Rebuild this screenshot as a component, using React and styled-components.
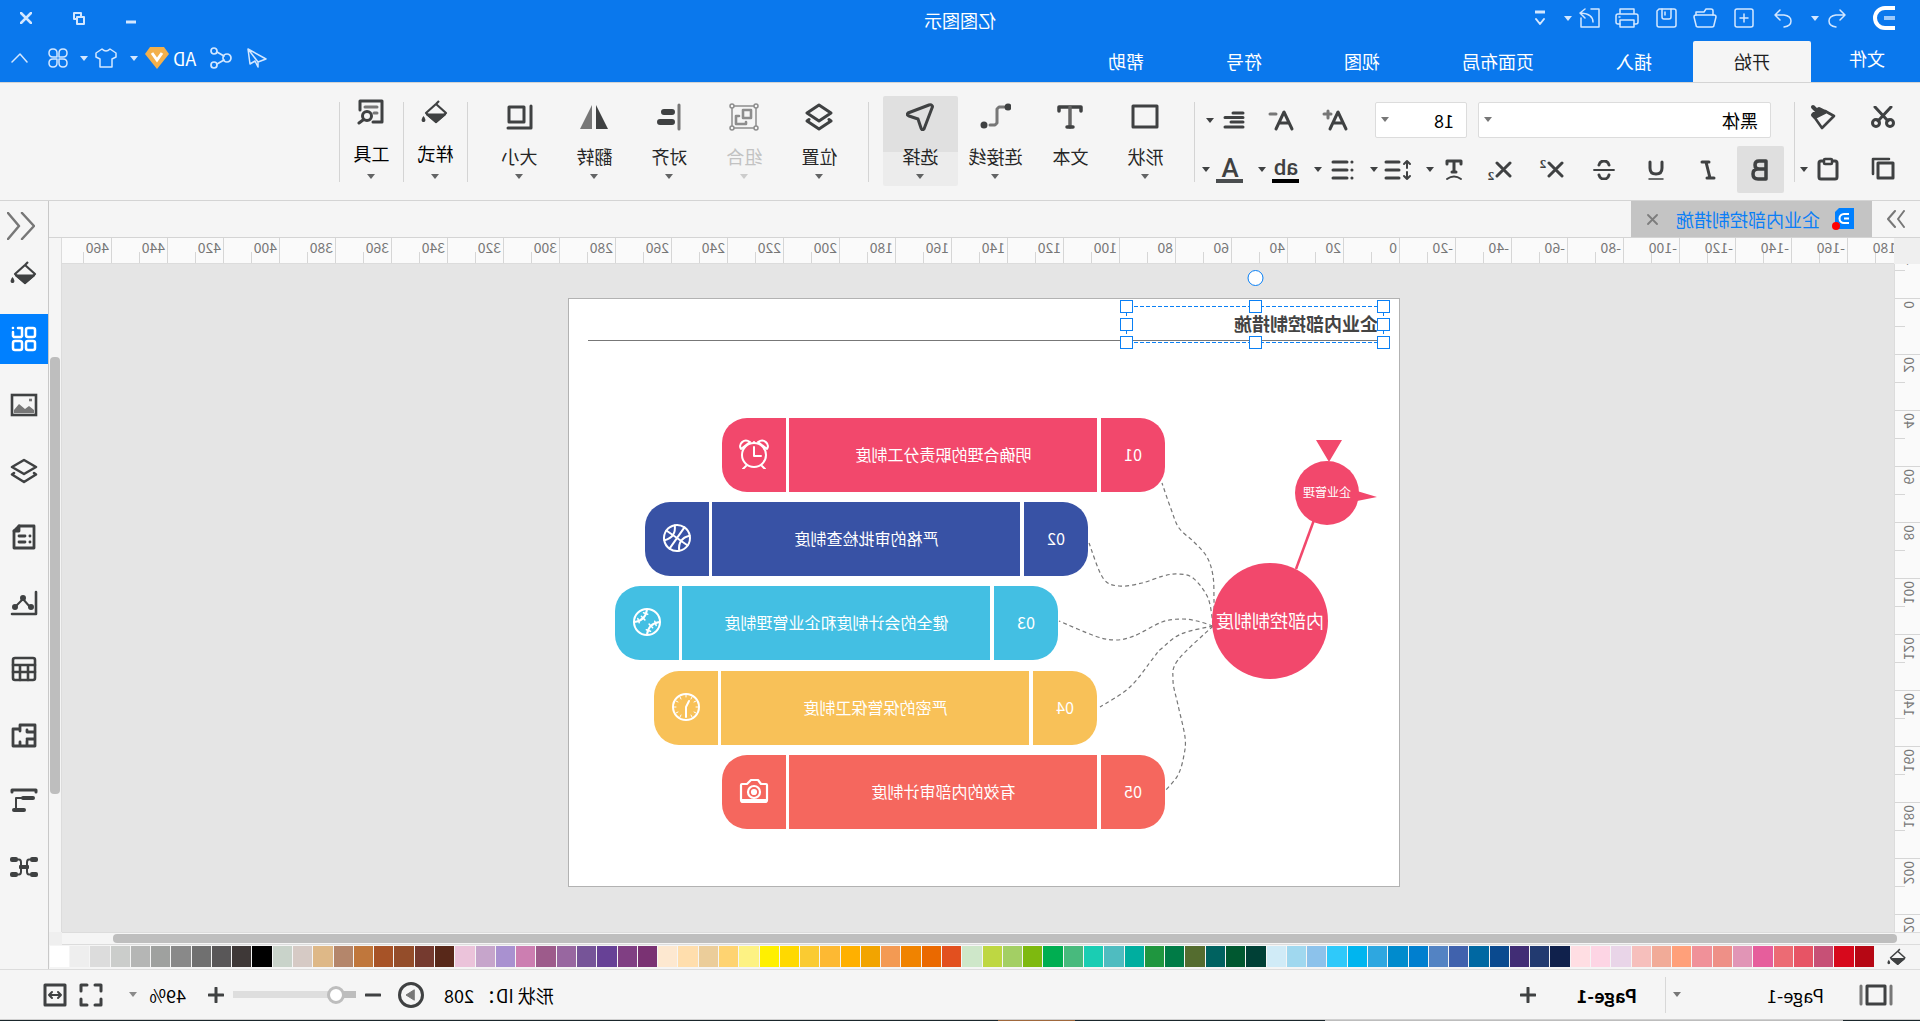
import React from "react";
import styled, { createGlobalStyle, css } from "styled-components";

const ink = "#3f4142";
const line = "#d4d4d4";
const panel = "#f5f5f5";
const blue = "#0a78ed";
const pink = "#f2486c";

const GlobalStyle = createGlobalStyle`
  *, *::before, *::after { box-sizing: border-box; }
  body { margin: 0; overflow: hidden; background: ${panel}; }
  body, button, select, input {
    font-family: "Noto Sans CJK SC", "Noto Sans", sans-serif;
    font-size: 18px;
    line-height: 24px;
    color: #1f1f1f;
  }
  button { border: 0; padding: 0; margin: 0; background: none; color: inherit; cursor: pointer; }
  svg { display: block; flex: none; }
`;

/* The whole window is presented as a mirror image. */
const Window = styled.div`
  display: flex;
  flex-direction: column;
  height: 100vh;
  background: ${panel};
  transform: scaleX(-1);
`;

/* ---------- shared pieces ---------- */

const Glyph = ({ w = 24, h = w, sw = 3, children, fill = "none" }) => (
  <svg
    width={w}
    height={h}
    viewBox={`0 0 ${w} ${h}`}
    fill={fill}
    stroke={fill === "none" ? "currentColor" : "none"}
    strokeWidth={sw}
    strokeLinecap="round"
    strokeLinejoin="round"
    aria-hidden="true"
  >
    {children}
  </svg>
);

const Caret = () => (
  <Glyph w={8} h={5} fill="currentColor">
    <path d="M0 0h8L4 5z" />
  </Glyph>
);

const IconButton = styled.button`
  display: flex;
  flex: none;
  align-items: center;
  justify-content: ${(p) => p.$justify || "center"};
  width: ${(p) => p.$w || 36}px;
  height: ${(p) => p.$h || 36}px;
  border-radius: 2px;
  background: ${(p) => (p.$active ? "#dfdfdf" : "transparent")};
`;

const Grow = styled.div`
  flex: 1;
`;

/* ---------- header ---------- */

const Header = styled.header`
  flex: none;
  background: ${blue};
  color: #d3e7ff;
`;

const TitleRow = styled.div`
  display: grid;
  grid-template-columns: 1fr auto 1fr;
  align-items: center;
  height: 41px;
`;

const QuickBar = styled.div`
  display: flex;
  align-items: center;
  height: 36px;
  align-self: start;
  padding-left: 24px;
`;

const Logo = styled.div`
  width: 41px;
  color: #fff;
`;

const AppTitle = styled.h1`
  margin: 0;
  padding-bottom: 2px;
  font-size: 18px;
  font-weight: 400;
  line-height: 24px;
  color: #fff;
`;

const WindowButtons = styled.div`
  display: flex;
  justify-content: flex-end;
  align-self: start;
  height: 34px;
`;

const TabRow = styled.div`
  display: flex;
  height: 41px;
`;

const FileTab = styled.button`
  width: 109px;
  height: 34px;
  padding-right: 3px;
  color: #fff;
`;

const RibbonTab = styled.button`
  height: 41px;
  padding: 0 41px 2px;
  border-radius: 2px 2px 0 0;
  color: ${(p) => (p.$active ? "#1f1f1f" : "#fff")};
  background: ${(p) => (p.$active ? panel : "transparent")};
`;

const HeaderTools = styled.div`
  display: flex;
  align-items: center;
  height: 34px;
  padding-right: 2px;
`;

const Account = styled.button`
  display: flex;
  align-items: center;
  gap: 4px;
  margin: 0 7px;
  color: #fff;
`;

/* ---------- ribbon ---------- */

const Ribbon = styled.div`
  display: flex;
  flex: none;
  align-items: flex-start;
  height: 119px;
  padding-top: 13px;
  border-top: 1px solid ${line};
  border-bottom: 1px solid ${line};
  color: ${ink};
`;

const Divider = styled.span`
  flex: none;
  width: 1px;
  height: 80px;
  margin-top: 6px;
  background: ${line};
`;

const ClipboardGroup = styled.div`
  display: flex;
  flex-direction: column;
  gap: 16px;
  width: 125px;
  padding: 3px 0 0 19px;
`;

const Row = styled.div`
  display: flex;
  align-items: center;
  gap: ${(p) => p.$gap || 0}px;
`;

const FontGroup = styled.div`
  width: 599px;
  padding-top: 6px;
`;

const FontRow = styled.div`
  display: flex;
  align-items: center;
  padding-left: 23px;
  margin-bottom: 8px;
`;

const StyleRow = styled.div`
  display: flex;
  align-items: center;
  padding-left: 10px;
`;

const FirstStyle = styled(IconButton)`
  margin-right: 3px;
`;

const SplitRow = styled.div`
  display: flex;
  gap: 8px;
`;

const Split = styled.button`
  display: flex;
  align-items: center;
  width: 48px;
  height: 36px;
`;

const SplitIcon = styled.span`
  display: flex;
  justify-content: center;
  width: 40px;
`;

const SizeButtons = styled.div`
  display: flex;
  align-items: center;
  margin-left: 13px;
`;

const Field = styled.label`
  position: relative;
  display: block;
  width: ${(p) => p.$w}px;
  margin-right: ${(p) => p.$mr || 0}px;
  color: #777;
  & > svg {
    position: absolute;
    right: 6px;
    top: 50%;
    margin-top: -3px;
    pointer-events: none;
  }
`;

const Select = styled.select`
  display: block;
  width: 100%;
  height: 36px;
  padding: 0 12px;
  appearance: none;
  border: 1px solid ${(p) => (p.$plain ? "transparent" : "#dcdcdc")};
  border-radius: 2px;
  background: ${(p) => (p.$plain ? "transparent" : "#fff")};
  color: #000;
`;

const BigGroup = styled.div`
  display: flex;
  padding: 0 14px 0 11px;
`;

const BigButton = styled.button`
  display: flex;
  flex-direction: column;
  align-items: center;
  width: ${(p) => (p.$raised ? 63 : 75)}px;
  height: 90px;
  padding-top: ${(p) => (p.$raised ? 2 : 7)}px;
  border-radius: 2px;
  color: ${(p) => (p.$off ? "#c2c2c2" : ink)};
  ${(p) =>
    p.$active &&
    css`
      background: linear-gradient(#e0e0e0 56px, #ececec 56px);
    `}
  & > span {
    margin: ${(p) => (p.$raised ? "15px 0 9px" : "13px 0 6px")};
    color: ${(p) => (p.$off ? "#c2c2c2" : p.$raised ? "#000" : "#262626")};
  }
  & > svg:last-child {
    opacity: 0.8;
  }
`;

/* ---------- workspace ---------- */

const Workspace = styled.div`
  display: flex;
  flex: 1;
  min-height: 0;
`;

const Main = styled.main`
  display: flex;
  flex: 1;
  flex-direction: column;
  min-width: 0;
`;

const DocTabs = styled.div`
  display: flex;
  flex: none;
  height: 37px;
  border-bottom: 1px solid ${line};
  color: #777;
`;

const DocTab = styled.div`
  display: flex;
  align-items: center;
  gap: 12px;
  padding: 0 16px 0 18px;
  background: #c4c4c4;
  color: #0a7ef7;
`;

const CloseTab = styled.button`
  margin-left: 6px;
  color: #7d7d7d;
`;

const Board = styled.div`
  display: grid;
  flex: 1;
  min-height: 0;
  grid-template: 26px minmax(0, 1fr) 13px / 26px minmax(0, 1fr) 13px;
`;

const Corner = styled.div`
  background: #efefef;
`;

const HRuler = styled.div`
  display: flex;
  overflow: hidden;
  background: #fafafa;
  border-bottom: 1px solid #dcdcdc;
`;

const HCell = styled.div`
  flex: none;
  width: 56px;
  padding-left: 2px;
  border-left: 1px solid #d6d6d6;
  background: linear-gradient(#d6d6d6, #d6d6d6) 27px 14px / 1px 12px no-repeat;
  font-size: 14px;
  line-height: 18px;
  color: #777;
  &:first-child { margin-left: -10px; }
`;

const VRuler = styled.div`
  overflow: hidden;
  background: #fafafa;
  border-right: 1px solid #dcdcdc;
`;

const VCell = styled.div`
  display: flex;
  height: 56px;
  padding-top: 2px;
  border-top: 1px solid #d6d6d6;
  background: linear-gradient(#d6d6d6, #d6d6d6) 15px 27px / 11px 1px no-repeat;
  font-size: 14px;
  line-height: 20px;
  color: #777;
  &:first-child { margin-top: -22px; }
  & > span {
    align-self: flex-start;
    writing-mode: vertical-rl;
    transform: rotate(180deg);
  }
`;

const Canvas = styled.div`
  display: flex;
  justify-content: center;
  align-items: flex-start;
  overflow: hidden;
  padding: 34px 12px 0 0;
  background: #e5e5e5;
`;

const VScroll = styled.div`
  grid-column: 3;
  grid-row: 1 / 3;
  padding: 119px 1px 138px 1px;
  border-left: 1px solid #dcdcdc;
`;

const HScroll = styled.div`
  grid-column: 1 / 3;
  padding: 1px 51px 1px 23px;
  border-top: 1px solid #dcdcdc;
  border-bottom: 1px solid #dcdcdc;
`;

const Thumb = styled.div`
  height: 100%;
  border-radius: 4px;
  background: #bebebe;
`;

const Palette = styled.div`
  display: flex;
  flex: none;
  height: 24px;
  padding: 1px 0 2px;
  color: ${ink};
`;

const Swatches = styled.div`
  display: flex;
  flex: 1;
  gap: 1px;
`;

const Swatch = styled.button`
  flex: 1;
  background: ${(p) => p.$color};
`;

const SidePanel = styled.aside`
  display: flex;
  flex: none;
  flex-direction: column;
  width: 49px;
  border-left: 1px solid #c8c8c8;
  color: ${ink};
`;

const CollapseButton = styled(IconButton)`
  width: 100%;
  height: 47px;
  padding: 2px 0 0 6px;
  color: #777;
`;

const SideButton = styled.button`
  display: flex;
  flex: none;
  align-items: center;
  justify-content: center;
  height: 50px;
  margin-bottom: 16px;
  background: ${(p) => (p.$active ? "#0080ff" : "transparent")};
  color: ${(p) => (p.$active ? "#fff" : ink)};
`;

/* ---------- drawing page ---------- */

const Page = styled.div`
  position: relative;
  flex: none;
  width: 832px;
  height: 589px;
  border: 1px solid #b2b2b2;
  background: #fff;
`;

const Layer = styled.svg`
  position: absolute;
  left: -1px;
  top: -1px;
  overflow: visible;
`;

const Placed = styled.div`
  position: absolute;
  left: ${(p) => p.$x}px;
  top: ${(p) => p.$y}px;
`;

const Heading = styled(Placed)`
  font-weight: 700;
  color: #444;
`;

const Circle = styled(Placed)`
  display: flex;
  align-items: center;
  justify-content: center;
  width: ${(p) => p.$d}px;
  height: ${(p) => p.$d}px;
  padding-bottom: 2px;
  border-radius: 50%;
  background: ${pink};
  color: #fff;
  font-size: ${(p) => p.$size}px;
  white-space: nowrap;
`;

const Bar = styled(Placed)`
  display: grid;
  grid-template-columns: 64px 308px 64px;
  justify-content: space-between;
  width: 443px;
  height: 74px;
  font-size: 16px;
  color: #fff;
`;

const Segment = styled.div`
  display: flex;
  align-items: center;
  justify-content: center;
  padding-bottom: 2px;
  background: ${(p) => p.$color};
  border-radius: ${(p) =>
    p.$end === "left" ? "25px 0 0 25px" : p.$end === "right" ? "0 25px 25px 0" : "0"};
`;

/* ---------- status bar ---------- */

const StatusBar = styled.footer`
  display: flex;
  flex: none;
  align-items: center;
  height: 51px;
  padding: 0 43px 0 27px;
  border-top: 1px solid #dcdcdc;
  border-bottom: 1px solid #d0d0d0;
  color: ${ink};
`;

const PagePicker = styled.div`
  padding-left: 22px;
`;

const StatusDivider = styled.span`
  width: 1px;
  height: 36px;
  background: #d8d8d8;
`;

const PageName = styled.button`
  margin: 0 31px 0 28px;
  font-weight: 700;
  color: #000;
`;

const StatusText = styled.span`
  margin-right: 12px;
  white-space: pre;
  color: #000;
`;

const ZoomButton = styled(IconButton)`
  width: 34px;
`;

const Range = styled.input`
  appearance: none;
  width: 123px;
  height: 18px;
  margin: 0;
  background: linear-gradient(90deg, #bdbdbd 20px, #dedede 20px) center / 100% 7px no-repeat;
  border-radius: 4px;
  &::-webkit-slider-thumb {
    appearance: none;
    width: 18px;
    height: 18px;
    border: 3px solid #bdbdbd;
    border-radius: 50%;
    background: #fff;
  }
`;

const ZoomValue = styled.button`
  display: flex;
  align-items: center;
  justify-content: space-between;
  width: 57px;
  margin: 0 26px 0 13px;
  color: #000;
  & > svg { color: #8a8a8a; }
`;

const FitButtons = styled.div`
  display: flex;
  gap: 12px;
`;

const DesktopEdge = styled.div`
  flex: none;
  height: 1px;
  background: linear-gradient(90deg, #1a262b 4%, #bdbdbd 4% 31%, #1a262b 31% 44%, #a0683c 44% 48%, #1a262b 48%);
`;

/* ---------- icons ---------- */

const Bucket = ({ w = 28, h = 24 }) => (
  <svg width={w} height={h} viewBox="0 0 28 24" fill="none" stroke="currentColor" strokeWidth="2.2" strokeLinejoin="round" aria-hidden="true">
    <path d="M13 4 3 13l10 9 10-9L13 4l-3-3" />
    <path d="M4 14.500h18L13 22z" fill="currentColor" />
    <path d="M25.500 16c-3 4-2 6 0 6s3-2 0-6z" fill="currentColor" stroke="none" />
  </svg>
);

const LayersIcon = () => (
  <Glyph w={28} h={28}>
    <path d="M14 2 26 10 14 18 2 10z" />
    <path d="M4 16.500 2 18l12 8 12-8-2-1.500" />
  </Glyph>
);

const DoubleChevron = ({ w = 18, h = 18, sw = 2, flip }) => (
  <Glyph w={w} h={h} sw={sw}>
    {flip ? (
      <path d={`M${w - 1} 1 ${w / 2 + 2} ${h / 2} ${w - 1} ${h - 1}M${w / 2 - 1} 1 1 ${h / 2} ${w / 2 - 1} ${h - 1}`} />
    ) : (
      <path d={`M1 1 ${w / 2 - 2} ${h / 2} 1 ${h - 1}M${w / 2 + 1} 1 ${w - 1} ${h / 2} ${w / 2 + 1} ${h - 1}`} />
    )}
  </Glyph>
);

const quickIcons = [
  ["新建", <Glyph w={20} h={20} sw={1.5}><rect x="1" y="1" width="18" height="18" rx="2" /><path d="M10 6v8M6 10h8" /></Glyph>],
  ["打开", <Glyph w={24} h={20} sw={1.5}><path d="M4 7V3q0-2 2-2h5l2 3h8v3" /><path d="M3 7h18q2 0 2 2l-2 8q0 2-2 2H5q-2 0-2-2L1 9q0-2 2-2z" /></Glyph>],
  ["保存", <Glyph w={21} h={20} sw={1.5}><path d="M3 1h15l2 2v14q0 2-2 2H3q-2 0-2-2V3q0-2 2-2z" /><path d="M6 1v8q0 2 2 2h5q2 0 2-2V1M12 4v3" /></Glyph>],
  ["打印", <Glyph w={24} h={20} sw={1.5}><path d="M5 6V1h14v5M5 16H3q-2 0-2-2V8q0-2 2-2h18q2 0 2 2v6q0 2-2 2h-2" /><path d="M5 12h14v7H5zM19 9h1" /></Glyph>],
];

const sideIcons = [
  ["填充", <Bucket />],
  ["符号库", <Glyph w={26} h={26} sw={2.500}><rect x="2" y="2" width="9" height="9" rx="2" /><path d="M24 2h.1M19 2h-4v8l1 1h7l1-1V6" /><rect x="2" y="15" width="9" height="9" rx="2" /><rect x="15" y="15" width="9" height="9" rx="2" /></Glyph>],
  ["图片", <svg width="28" height="24" viewBox="0 0 28 24" fill="none" stroke="currentColor" strokeWidth="2.600" aria-hidden="true"><rect x="2" y="2" width="24" height="20" /><path d="M4 20v-3l5-4 4 3 6-5 5 6v3z" fill="#777" stroke="none" /><path d="M6 7h3" stroke="#777" /></svg>],
  ["图层", <Glyph w={28} h={26} sw={2.600}><path d="M14 2 26 9 14 16 2 9z" /><path d="M4 15 2 16.500 14 24l12-7.500L24 15" /></Glyph>],
  ["注释", <Glyph w={24} h={26} sw={2.800}><path d="M2 2h15l5 5v17H2z" /><path d="M17 2v5h5" fill="currentColor" /><path d="M6 12h.1M11 12h6M6 18h.1M11 18h6" /></Glyph>],
  ["图表", <Glyph w={28} h={26} sw={2}><path d="M2 2v22h24" strokeWidth="2.600" /><path d="m8 17 7-8 8 8" /><g fill="currentColor"><circle cx="7" cy="17" r="2" /><circle cx="15" cy="8" r="2" /><circle cx="23" cy="17" r="2" /></g></Glyph>],
  ["表格", <Glyph w={26} h={26} sw={2.600}><rect x="2" y="2" width="22" height="22" rx="2" /><path d="M2 9h22M2 16h22M9 9v15M17 9v15" /></Glyph>],
  ["平面图", <Glyph w={26} h={25} sw={2.800}><path d="M2 2h15v4h7v17H2zM2 9h8V7M2 16h8M10 18v5M17 19v4M17 6v2" /></Glyph>],
  ["组织", <Glyph w={28} h={26} sw={3}><path d="M2 4V2h24v2" /><path d="M5 10h10M14 22h10" strokeWidth="4" /><path d="M15 10h7v11" strokeWidth="2" /></Glyph>],
  ["导图", <Glyph w={30} h={24} sw={2}><g fill="currentColor" stroke="none"><rect x="1" y="2" width="8" height="5" rx="2" /><rect x="21" y="2" width="8" height="5" rx="2" /><rect x="1" y="17" width="8" height="5" rx="2" /><rect x="21" y="17" width="8" height="5" rx="2" /><rect x="10" y="10" width="10" height="4" rx="1" /></g><path d="M9 4.500h1q2 0 2 3v9q0 3-2 3H9M21 4.500h-1q-2 0-2 3v9q0 3 2 3h1" /></Glyph>],
];

const bars = [
  { n: "01", x: 234, y: 120, color: pink, label: "明确合理的职责分工制度" },
  { n: "02", x: 311, y: 204, color: "#3852a5", label: "严格的审批检查制度" },
  { n: "03", x: 341, y: 288, color: "#43bfe3", label: "健全的会计制度和企业管理制度" },
  { n: "04", x: 302, y: 373, color: "#f8c158", label: "严密的保管保卫制度" },
  { n: "05", x: 234, y: 457, color: "#f5675e", label: "有效的内部审计制度" },
];

const barIcons = [
  <Glyph w={30} h={30} sw={2}><circle cx="15" cy="16" r="12" /><path d="M15 8v9H8M7 27l-3 3M23 27l3 3M2 10c-3-5 3-11 9-7zM28 10c3-5-3-11-9-7zM15 3v1" /></Glyph>,
  <Glyph w={30} h={30} sw={2}><g transform="rotate(-35 15 15)"><circle cx="15" cy="15" r="13" /><path d="M15 2v26M2 15h26M6 6q8 9 0 18M24 6q-8 9 0 18" /></g></Glyph>,
  <Glyph w={30} h={30} sw={2}><g transform="rotate(-45 15 15)"><circle cx="15" cy="15" r="13" /><path d="M6 6q7 9 0 18M24 6q-7 9 0 18" /><path d="m6 11 4-2M7 15h5M6 19l4 2M24 11l-4-2M23 15h-5M24 19l-4 2" strokeWidth="1.500" /></g></Glyph>,
  <Glyph w={30} h={30} sw={2}><circle cx="15" cy="15" r="13" /><path d="M15 25V15l-3-6" /><path d="M15 3v2M3 15h2M25 15h2M9 5l1 2M21 5l-1 2M5 9l2 1M25 9l-2 1M5 21l2-1M25 21l-2-1M9 25l1-2M21 25l-1-2" strokeWidth="1" /></Glyph>,
  <Glyph w={30} h={26} sw={2.200}><path d="M3 6h5l3-4h7l4 4h5q1 0 1 1v15q0 2-2 2H4q-2 0-2-2V7q0-1 1-1zM2 22h26" /><circle cx="15" cy="14" r="6" /><circle cx="15" cy="14" r="2" fill="currentColor" /></Glyph>,
];

const connectors = [
  [[186, 326], [186, 302], [187, 278], [193, 259], [206, 244], [221, 230], [229, 211], [238, 185]],
  [[187, 327], [192, 300], [207, 280], [222, 276], [237, 278], [258, 285], [281, 288], [297, 280], [311, 245]],
  [[187, 328], [203, 323], [219, 321], [238, 324], [266, 338], [285, 342], [305, 338], [341, 323]],
  [[187, 328], [219, 336], [239, 351], [246, 359], [270, 389], [300, 409]],
  [[187, 328], [222, 362], [227, 382], [222, 407], [215, 439], [216, 457], [222, 477], [235, 493]],
];

// Catmull-Rom spline through the points, written as cubic segments.
const smooth = (pts) =>
  pts.slice(1).reduce((d, p, i) => {
    const a = pts[Math.max(i - 1, 0)];
    const b = pts[i];
    const c = pts[Math.min(i + 2, pts.length - 1)];
    return `${d}C${b[0] + (p[0] - a[0]) / 6} ${b[1] + (p[1] - a[1]) / 6} ${p[0] - (c[0] - b[0]) / 6} ${p[1] - (c[1] - b[1]) / 6} ${p[0]} ${p[1]}`;
  }, `M${pts[0][0]} ${pts[0][1]}`);

const swatches = (
  "b60714 d7091c c75076 e75465 ec6b74 e65e9c e195b6 ee9087 f09199 ffa07a f1ab98 f6bfbc e9d5e8 fdd5e4 ffdee3 " +
  "10214c 223a70 412d75 0a4a8f 0068a2 4062ad 5383c3 007fcf 008bcd 2ea7e0 00b5ef 2fc9fa 8cc2eb a0d8ef d0ebf7 " +
  "004036 005830 006260 546c2f 007b46 1f963f 00ae9f 4fbcc0 1acdb3 48ba7d 00ae51 7eb90f a3cf64 bed742 cee7c9 " +
  "e2501f ea6900 f08300 f39a53 f2a400 ffb000 fdb933 facb32 ffd900 fff000 fdf283 fed371 ebcd9a ffdead fde8d0 " +
  "7a3273 803f83 674196 765498 9867a0 9d5b8b cc7eb1 a991d0 c6a5cb ebc3da 582819 753a2f 944d2a a75327 c0773c " +
  "b4866b deb887 d6cac5 c9d3ca 000000 3e3837 595758 707070 898989 9fa19f b5b6b5 cbcdcb dcdcdc eeeeee ffffff"
).split(" ");

const range = (from, to) => Array.from({ length: (to - from) / 20 + 1 }, (_, i) => from + i * 20);

/* ---------- sections ---------- */

function AppHeader() {
  return (
    <Header>
      <TitleRow>
        <QuickBar>
          <Logo>
            <Glyph w={24} h={26} sw={4}>
              <path d="M1 3h10a10 10 0 0 0 0 0a10 10 0 0 1 0 20H1" strokeLinecap="butt" />
              <path d="M1 13h11" stroke="#9cc9fa" strokeLinecap="butt" />
            </Glyph>
          </Logo>
          <IconButton aria-label="撤销"><Glyph w={18} h={20} sw={1.500}><path d="M6 2 1 7l5 5M1 7h9q7 1 7 6t-7 6" /></Glyph></IconButton>
          <IconButton aria-label="撤销列表" $w={16} $justify="flex-start"><Caret /></IconButton>
          <IconButton aria-label="恢复" $w={39}><Glyph w={18} h={20} sw={1.500}><path d="m12 2 5 5-5 5M17 7H8q-7 1-7 6t7 6" /></Glyph></IconButton>
          {quickIcons.map(([name, icon]) => (
            <IconButton key={name} aria-label={name} $w={39}>{icon}</IconButton>
          ))}
          <IconButton aria-label="导出"><Glyph w={22} h={20} sw={1.500}><path d="M10 1H2v18h18v-9" /><path d="M8 14q0-8 12-9M16 1l5 4-5 5" /></Glyph></IconButton>
          <IconButton aria-label="导出列表" $w={16} $justify="flex-start"><Caret /></IconButton>
          <IconButton aria-label="自定义" $w={32}><Glyph w={12} h={16} sw={2}><path d="M1 2h10" strokeWidth="3" strokeLinecap="butt" /><path d="m2 9 4 5 4-5" /></Glyph></IconButton>
        </QuickBar>
        <AppTitle>亿图图示</AppTitle>
        <WindowButtons>
          <IconButton aria-label="最小化" $w={51}><Glyph w={10} h={12} sw={3}><path d="M0 10h10" strokeLinecap="butt" /></Glyph></IconButton>
          <IconButton aria-label="还原" $w={53}><Glyph w={12} h={13} sw={2}><path d="M1 5h7v7H1zM4 4V1h7v6H9" /></Glyph></IconButton>
          <IconButton aria-label="关闭" $w={53}><Glyph w={12} h={12} sw={2.500}><path d="m1 1 10 10M11 1 1 11" /></Glyph></IconButton>
        </WindowButtons>
      </TitleRow>
      <TabRow>
        <FileTab>文件</FileTab>
        {["开始", "插入", "页面布局", "视图", "符号", "帮助"].map((t, i) => (
          <RibbonTab key={t} $active={i === 0}>{t}</RibbonTab>
        ))}
        <Grow />
        <HeaderTools>
          <IconButton aria-label="发送"><Glyph w={20} h={20} sw={1.500}><path d="M19 1 1 11l8 3zM19 1l-2 15-5-3-3 6v-5z" /></Glyph></IconButton>
          <IconButton aria-label="分享"><Glyph w={22} h={22} sw={1.700}><circle cx="5" cy="11" r="4" /><circle cx="18" cy="4" r="3" /><circle cx="18" cy="18" r="3" /><path d="m8 9 7-4M8 13l7 4" /></Glyph></IconButton>
          <Account>
            AD
            <svg width="24" height="22" viewBox="0 0 24 22" aria-hidden="true"><path d="M5 0h14l5 7-12 15L0 7z" fill="#f3b04b" /><path d="m7 6 5 7 5-7" fill="none" stroke="#fff" strokeWidth="3" /></svg>
          </Account>
          <IconButton aria-label="账户列表" $w={16} $justify="flex-start"><Caret /></IconButton>
          <IconButton aria-label="皮肤" $w={32}><Glyph w={22} h={20} sw={1.500}><path d="M7 1 1 5v4l4 2v8h12v-8l4-2V5l-6-4q-4 4-8 0z" /></Glyph></IconButton>
          <IconButton aria-label="皮肤列表" $w={12}><Caret /></IconButton>
          <IconButton aria-label="应用" $w={40}><Glyph w={20} h={20} sw={1.500}><path d="M5 1q4 0 4 4v4H5q-4 0-4-4t4-4zM15 1q4 0 4 4t-4 4h-4V5q0-4 4-4zM5 11h4v4q0 4-4 4t-4-4 4-4zM11 11h4q4 0 4 4t-4 4-4-4z" /></Glyph></IconButton>
          <IconButton aria-label="折叠功能区"><Glyph w={17} h={10} sw={1.500}><path d="m1 9 7-8 8 8" /></Glyph></IconButton>
        </HeaderTools>
      </TabRow>
    </Header>
  );
}

const styleButtons = [
  ["斜体", <Glyph w={16} h={20} sw={3}><path d="M7 2h7M2 18h7M10 2 6 18" /></Glyph>],
  ["下划线", <Glyph w={18} h={20} sw={3}><path d="M3 2v6q0 6 6 6t6-6V2" /><path d="M2 19h14" strokeWidth="1.500" /></Glyph>],
  ["删除线", <Glyph w={22} h={20} sw={3}><path d="M16 5q-1-4-5-4T6 5M6 15q1 4 5 4t5-4" /><path d="M1 10h20" strokeWidth="1.800" /></Glyph>],
];

const splitButtons = [
  ["文字效果", <Glyph w={18} h={22} sw={3}><path d="M2 5V2h14v3M9 2v11M7 13h4" /><path d="M2 20q7-5 14 0" strokeWidth="2" /></Glyph>],
  ["行距", <Glyph w={28} h={22} sw={3}><path d="M13 3h13M13 11h13M13 19h13" /><path d="M5 9V2M2 5l3-3 3 3M5 13v7M2 17l3 3 3-3" strokeWidth="2" /></Glyph>],
  ["项目符号", <Glyph w={24} h={20} sw={3}><path d="M2 2h.1M7 2h14M2 10h.1M7 10h14M2 18h.1M7 18h14" /></Glyph>],
];

const UnderText = styled.span`
  width: 27px;
  border-bottom: 4px solid ${(p) => p.$color};
  font-family: Roboto, sans-serif;
  font-weight: 500;
  font-size: ${(p) => p.$size}px;
  line-height: 22px;
  text-align: center;
`;

const LetterA = ({ sign }) => (
  <Glyph w={26} h={22} sw={3}>
    <path d="M2 20 10 3l8 17M5 14h10" />
    <path d={sign} stroke="#777" />
  </Glyph>
);

const Script = styled.span`
  display: flex;
  align-items: ${(p) => p.$align};
  height: 24px;
  gap: 1px;
  font-family: "Liberation Serif", serif;
  font-size: 13px;
  line-height: 12px;
  font-weight: 700;
  & > svg { align-self: center; }
`;

const Cross = () => <Glyph w={17} h={17} sw={3}><path d="m2 2 13 13M15 2 2 15" /></Glyph>;

const bigFirst = [
  ["形状", <Glyph w={28} h={28} sw={3}><rect x="2" y="3" width="24" height="21" /></Glyph>, true],
  ["文本", <Glyph w={28} h={28} sw={3.500}><path d="M3 8V4h22v4" /><path d="M14 4v20" stroke="#666" /><path d="M11 24h6" /></Glyph>, false],
  ["连接线", <Glyph w={32} h={28} sw={3}><path d="M7 4h5l2 2v14l2 2h5" stroke="#777" /><g fill="currentColor"><circle cx="3" cy="4" r="2" /><circle cx="27" cy="22" r="2" /></g></Glyph>, true],
  ["选择", <Glyph w={28} h={28} sw={3}><path d="M2 2.500q1-1 3-.5l21 8q2 2-1 3l-9 3-3 9q-1 3-3 1L2 5q-1-2 0-2.500z" /></Glyph>, true],
];

const bigSecond = [
  ["位置", <LayersIcon />],
  ["组合", <Glyph w={30} h={28} sw={1.500}><g stroke="#8d8d8d"><rect x="3" y="3" width="24" height="22" /><g fill={panel}><circle cx="3" cy="3" r="2" /><circle cx="27" cy="3" r="2" /><circle cx="3" cy="25" r="2" /><circle cx="27" cy="25" r="2" /></g><path d="M8 7h8v8H8zM20 13h3v8H13v-2" strokeWidth="2.600" /></g></Glyph>],
  ["对齐", <Glyph w={24} h={28} sw={3}><path d="M2 2v24" stroke="#777" /><path d="M9 9h8M9 19h12" strokeWidth="6" /></Glyph>],
  ["翻转", <Glyph w={28} h={28} fill="currentColor"><path d="M12 2v24H0z" /><path d="M16 2v24h12z" fill="#777" /></Glyph>],
  ["大小", <Glyph w={28} h={28} sw={3}><rect x="9" y="4" width="15" height="15" /><path d="M2 3v22h23" /></Glyph>],
];

function AppRibbon() {
  return (
    <Ribbon>
      <ClipboardGroup>
        <Row $gap={20}>
          <IconButton aria-label="剪切"><Glyph w={24} h={22} sw={3}><path d="m4 1 13 14M20 1 7 15" /><circle cx="5" cy="17" r="3.500" /><circle cx="19" cy="17" r="3.500" /></Glyph></IconButton>
          <IconButton aria-label="格式刷" $justify="flex-end"><Glyph w={28} h={28} sw={2.600}><path d="m24 4-5 5M18 6l6 6-2 2-10-5z" fill="currentColor" strokeWidth="4" /><path d="m12 8-9 5 12 12 7-10" /></Glyph></IconButton>
        </Row>
        <Row $gap={17}>
          <IconButton aria-label="复制"><Glyph w={24} h={24} sw={3}><rect x="2" y="6" width="15" height="15" /><path d="M6 2h16v15" strokeWidth="2.600" /></Glyph></IconButton>
          <Split aria-label="粘贴">
            <SplitIcon><Glyph w={22} h={24} sw={3}><rect x="2" y="4" width="18" height="18" rx="2" /><rect x="7" y="2" width="8" height="5" rx="1" fill={panel} strokeWidth="2.500" /></Glyph></SplitIcon>
            <Caret />
          </Split>
        </Row>
      </ClipboardGroup>
      <Divider />
      <FontGroup>
        <FontRow>
          <Field $w={293} $mr={11}>
            <Select aria-label="字体"><option>黑体</option></Select>
            <Caret />
          </Field>
          <Field $w={92}>
            <Select aria-label="字号"><option>18</option></Select>
            <Caret />
          </Field>
          <SizeButtons>
            <IconButton aria-label="增大字号" $w={54}><LetterA sign="M17 5h7M20 2v7" /></IconButton>
            <IconButton aria-label="减小字号" $w={54}><LetterA sign="M18 5h6" /></IconButton>
            <Split aria-label="段落对齐">
              <SplitIcon><Glyph w={22} h={18} sw={3}><path d="M2 2h10M2 6.500h18M2 11h12M2 16h18" /></Glyph></SplitIcon>
              <Caret />
            </Split>
          </SizeButtons>
        </FontRow>
        <StyleRow>
          <FirstStyle aria-label="加粗" $w={47} $h={47} $active>
            <Glyph w={18} h={22} sw={3.500}><path d="M3 2h7q4 0 4 4t-4 4H3zM3 10h8q5 0 5 5t-5 5H3z" /></Glyph>
          </FirstStyle>
          {styleButtons.map(([name, icon]) => (
            <IconButton key={name} aria-label={name} $w={52}>{icon}</IconButton>
          ))}
          <IconButton aria-label="上标" $w={52}><Script $align="flex-start"><Cross />2</Script></IconButton>
          <IconButton aria-label="下标" $w={52}><Script $align="flex-end"><Cross />2</Script></IconButton>
          <SplitRow>
            {splitButtons.map(([name, icon]) => (
              <Split key={name} aria-label={name}><SplitIcon>{icon}</SplitIcon><Caret /></Split>
            ))}
            <Split aria-label="突出显示"><SplitIcon><UnderText $color="#000" $size={22}>ab</UnderText></SplitIcon><Caret /></Split>
            <Split aria-label="字体颜色"><SplitIcon><UnderText $color="#4a4d4f" $size={26}>A</UnderText></SplitIcon><Caret /></Split>
          </SplitRow>
        </StyleRow>
      </FontGroup>
      <Divider />
      <BigGroup>
        {bigFirst.map(([name, icon, menu]) => (
          <BigButton key={name} $active={name === "选择"}>{icon}<span>{name}</span>{menu && <Caret />}</BigButton>
        ))}
      </BigGroup>
      <Divider />
      <BigGroup>
        {bigSecond.map(([name, icon]) => (
          <BigButton key={name} $off={name === "组合"}>{icon}<span>{name}</span><Caret /></BigButton>
        ))}
      </BigGroup>
      <Divider />
      <BigButton $raised><Bucket w={28} h={28} /><span>样式</span><Caret /></BigButton>
      <Divider />
      <BigButton $raised>
        <Glyph w={28} h={28} sw={3}><path d="M12 24H3V3h22v9" /><path d="M8 9h12M8 15h3" stroke="#777" /><circle cx="18" cy="18" r="4.500" /><path d="m22 22 4 3" /></Glyph>
        <span>工具</span><Caret />
      </BigButton>
      <Divider />
    </Ribbon>
  );
}

function DrawingPage() {
  return (
    <Page>
      <Layer width="831" height="589" viewBox="0 0 831 589" aria-hidden="true">
        <path d="M21 42.500H812" stroke="#777" />
        <g fill={pink}>
          <path d="M58 142h26L71 164zM23 199l20-6v10z" />
          <path d="m86 222 18 49" stroke={pink} strokeWidth="2.500" />
        </g>
        {connectors.map((pts, i) => (
          <path key={i} d={smooth(pts)} fill="none" stroke="#777" strokeWidth="1.200" strokeDasharray="4 3" />
        ))}
      </Layer>
      <Heading $x={21} $y={12}>企业内部控制措施</Heading>
      <Circle $x={40} $y={162} $d={64} $size={12}>企业管理</Circle>
      <Circle $x={71} $y={264} $d={116} $size={18}>内部控制制度</Circle>
      {bars.map((b, i) => (
        <Bar key={b.n} $x={b.x} $y={b.y - 1}>
          <Segment $color={b.color} $end="left">{b.n}</Segment>
          <Segment $color={b.color}>{b.label}</Segment>
          <Segment $color={b.color} $end="right">{barIcons[i]}</Segment>
        </Bar>
      ))}
      <Layer width="831" height="589" viewBox="0 0 831 589" fill="none" stroke="#0a80f5" aria-hidden="true">
        <path d="M16 8.500H273M16 44.500H273M16.500 8v36M273.500 8v36" strokeDasharray="4 2" />
        <circle cx="144.500" cy="-20" r="7.500" fill="#fff" />
        <g fill="#fff">
          {[16, 144, 273].flatMap((x) =>
            [8, 26, 44]
              .filter((y) => !(x === 144 && y === 26))
              .map((y) => <rect key={`${x}-${y}`} x={x - 5.5} y={y - 5.5} width="12" height="12" />)
          )}
        </g>
      </Layer>
    </Page>
  );
}

function AppStatus() {
  return (
    <StatusBar>
      <IconButton aria-label="页面视图" $w={34}>
        <Glyph w={34} h={22} sw={3}><rect x="8" y="2" width="18" height="18" /><path d="M2 2v18M32 2v18" stroke="#777" /></Glyph>
      </IconButton>
      <PagePicker>
        <Field $w={170} $mr={1}>
          <Select $plain aria-label="页面"><option>Page-1</option></Select>
          <Caret />
        </Field>
      </PagePicker>
      <StatusDivider />
      <PageName>Page-1</PageName>
      <IconButton aria-label="添加页面"><Glyph w={16} h={16} sw={3}><path d="M8 1v14M1 8h14" /></Glyph></IconButton>
      <Grow />
      <StatusText>形状 ID： 208</StatusText>
      <IconButton aria-label="演示" $w={42}>
        <Glyph w={28} h={28} sw={3}><circle cx="14" cy="14" r="11.500" /><path d="m11 9 8 5-8 5z" fill="#777" stroke="#777" strokeWidth="1" /></Glyph>
      </IconButton>
      <ZoomButton aria-label="缩小"><Glyph w={16} h={16} sw={3}><path d="M1 8h14" /></Glyph></ZoomButton>
      <Range type="range" min="0" max="100" defaultValue="10" aria-label="缩放" />
      <ZoomButton aria-label="放大"><Glyph w={16} h={16} sw={3}><path d="M8 1v14M1 8h14" /></Glyph></ZoomButton>
      <ZoomValue>49%<Caret /></ZoomValue>
      <FitButtons>
        <IconButton aria-label="全屏" $w={24}><Glyph w={24} h={24} sw={3}><path d="M2 8V2h6M16 2h6v6M22 16v6h-6M8 22H2v-6" /></Glyph></IconButton>
        <IconButton aria-label="适应宽度" $w={24}><Glyph w={24} h={24} sw={3}><rect x="2" y="2" width="20" height="20" /><path d="M6 12h12M9 9l-3 3 3 3M15 9l3 3-3 3" strokeWidth="2" /></Glyph></IconButton>
      </FitButtons>
    </StatusBar>
  );
}

export default function App() {
  return (
    <>
      <GlobalStyle />
      <Window>
        <AppHeader />
        <AppRibbon />
        <Workspace>
          <Main>
            <DocTabs>
              <IconButton aria-label="展开左侧面板" $w={48}><DoubleChevron /></IconButton>
              <DocTab>
                <svg width="22" height="22" viewBox="0 0 22 22" aria-hidden="true">
                  <path d="M0 0h15l4 4v17H0z" fill="#0080ff" />
                  <path d="M5 6h5a4.500 4.500 0 0 1 0 9H5M5 10.500h5" fill="none" stroke="#fff" strokeWidth="2" />
                  <circle cx="18" cy="18" r="4" fill="#f00" />
                </svg>
                <span>企业内部控制措施</span>
                <CloseTab aria-label="关闭文档"><Glyph w={11} h={11} sw={1.800}><path d="m1 1 9 9M10 1l-9 9" /></Glyph></CloseTab>
              </DocTab>
            </DocTabs>
            <Board>
              <Corner />
              <HRuler>{range(-180, 460).map((n) => <HCell key={n}>{n}</HCell>)}</HRuler>
              <VRuler>{range(-20, 220).map((n) => <VCell key={n}><span>{n}</span></VCell>)}</VRuler>
              <Canvas><DrawingPage /></Canvas>
              <VScroll><Thumb /></VScroll>
              <HScroll><Thumb /></HScroll>
              <Corner />
            </Board>
            <Palette>
              <IconButton aria-label="填充颜色" $w={46} $h={21}><Bucket w={20} h={20} /></IconButton>
              <Swatches>
                {swatches.map((c) => <Swatch key={c} $color={`#${c}`} aria-label={`#${c}`} />)}
              </Swatches>
            </Palette>
          </Main>
          <SidePanel>
            <CollapseButton aria-label="折叠右侧面板"><DoubleChevron w={28} h={28} sw={2.500} flip /></CollapseButton>
            {sideIcons.map(([name, icon], i) => (
              <SideButton key={name} aria-label={name} $active={i === 1}>{icon}</SideButton>
            ))}
          </SidePanel>
        </Workspace>
        <AppStatus />
        <DesktopEdge />
      </Window>
    </>
  );
}
